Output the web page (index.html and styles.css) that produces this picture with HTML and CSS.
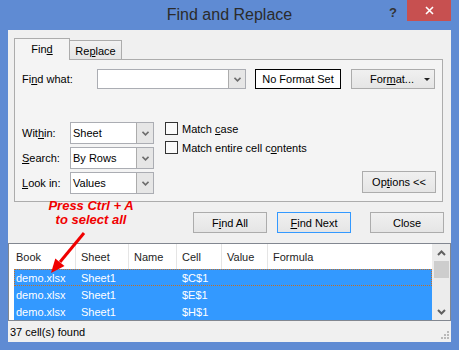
FILE: index.html
```html
<!DOCTYPE html>
<html lang="en">
<head>
    <meta charset="UTF-8">
    <title>Find and Replace</title>
    <link rel="stylesheet" href="styles.css">
</head>
<body>

    <div class="window">
        <div class="titlebar">
            <span></span>
            <div class="title">Find and Replace</div>
            <div class="controls">
                <span class="help">?</span>
                <span class="close">
                    <svg width="9" height="9" viewBox="0 0 9 9"><path d="M1 1L8 8M8 1L1 8" stroke="#fff" stroke-width="1.6"/></svg>
                </span>
            </div>
        </div>

        <div class="client">
            <div class="tabs">
                <div class="tab active">Fin<u>d</u></div>
                <div class="tab">Re<u>p</u>lace</div>
            </div>

            <div class="panel">
                <div class="find-row">
                    <span class="find-label">Fi<u>n</u>d what:</span>
                    <div class="combo wide">
                        <span class="value"></span>
                        <span class="drop"><svg width="7" height="5" viewBox="0 0 7 5"><path d="M0.5 0.8L3.5 3.8L6.5 0.8" fill="none" stroke="#6d6d6d" stroke-width="1.6"/></svg></span>
                    </div>
                    <div class="no-format">No Format Set</div>
                    <button class="btn format-btn"><span>For<u>m</u>at...</span><span class="caret"></span></button>
                </div>

                <div class="lower">
                    <div class="fields">
                        <span>Wit<u>h</u>in:</span>
                        <div class="combo">
                            <span class="value">Sheet</span>
                            <span class="drop"><svg width="7" height="5" viewBox="0 0 7 5"><path d="M0.5 0.8L3.5 3.8L6.5 0.8" fill="none" stroke="#6d6d6d" stroke-width="1.6"/></svg></span>
                        </div>
                        <span><u>S</u>earch:</span>
                        <div class="combo">
                            <span class="value">By Rows</span>
                            <span class="drop"><svg width="7" height="5" viewBox="0 0 7 5"><path d="M0.5 0.8L3.5 3.8L6.5 0.8" fill="none" stroke="#6d6d6d" stroke-width="1.6"/></svg></span>
                        </div>
                        <span><u>L</u>ook in:</span>
                        <div class="combo">
                            <span class="value">Values</span>
                            <span class="drop"><svg width="7" height="5" viewBox="0 0 7 5"><path d="M0.5 0.8L3.5 3.8L6.5 0.8" fill="none" stroke="#6d6d6d" stroke-width="1.6"/></svg></span>
                        </div>
                    </div>

                    <div class="checks">
                        <label class="check"><span class="box"></span><span>Match <u>c</u>ase</span></label>
                        <label class="check"><span class="box"></span><span>Match entire cell c<u>o</u>ntents</span></label>
                    </div>

                    <button class="btn options-btn">Op<u>t</u>ions &lt;&lt;</button>
                </div>
            </div>

            <div class="actions">
                <button class="btn">F<u>i</u>nd All</button>
                <button class="btn default"><u>F</u>ind Next</button>
                <button class="btn close-btn">Close</button>
            </div>

            <div class="results">
                <div class="list">
                    <div class="list-head">
                        <span>Book</span>
                        <span>Sheet</span>
                        <span>Name</span>
                        <span>Cell</span>
                        <span>Value</span>
                        <span>Formula</span>
                    </div>
                    <div class="list-row focused">
                        <span>demo.xlsx</span><span>Sheet1</span><span></span><span>$C$1</span><span></span><span></span>
                    </div>
                    <div class="list-row">
                        <span>demo.xlsx</span><span>Sheet1</span><span></span><span>$E$1</span><span></span><span></span>
                    </div>
                    <div class="list-row">
                        <span>demo.xlsx</span><span>Sheet1</span><span></span><span>$H$1</span><span></span><span></span>
                    </div>
                </div>
                <div class="scrollbar">
                    <span class="arrow"><svg width="9" height="6" viewBox="0 0 9 6"><path d="M1 5L4.5 1.5L8 5" fill="none" stroke="#606060" stroke-width="2"/></svg></span>
                    <span class="thumb"></span>
                    <span class="track"></span>
                    <span class="arrow"><svg width="9" height="6" viewBox="0 0 9 6"><path d="M1 1L4.5 4.5L8 1" fill="none" stroke="#606060" stroke-width="2"/></svg></span>
                </div>
            </div>

            <div class="status">
                37 cell(s) found
                <svg class="grip" width="9" height="9" viewBox="0 0 9 9">
                    <rect x="6" y="0" width="2" height="2" fill="#b9b9b9"/>
                    <rect x="3" y="3" width="2" height="2" fill="#b9b9b9"/>
                    <rect x="6" y="3" width="2" height="2" fill="#b9b9b9"/>
                    <rect x="0" y="6" width="2" height="2" fill="#b9b9b9"/>
                    <rect x="3" y="6" width="2" height="2" fill="#b9b9b9"/>
                    <rect x="6" y="6" width="2" height="2" fill="#b9b9b9"/>
                </svg>
            </div>

            <!-- annotation drawn over the dialog -->
            <div class="note">
                <div>Press Ctrl + A</div>
                <div>to select all</div>
            </div>
            <svg class="note-arrow" width="55" height="55" viewBox="0 0 55 55">
                <path d="M41 8L17 37" stroke="#f00000" stroke-width="3"/>
                <path d="M8 48L21.5 41L12.3 33.4Z" fill="#f00000"/>
            </svg>
        </div>
    </div>

</body>
</html>
```

FILE: styles.css
```css
* {
    margin: 0;
    padding: 0;
    box-sizing: border-box;
}

body {
    width: 459px;
    height: 350px;
    overflow: hidden;
    font-family: "Liberation Sans", Arial, sans-serif;
    font-size: 11px;
    color: #000;
}

u {
    text-decoration: underline;
    text-underline-offset: 1px;
}

.window {
    height: 350px;
    background: #5f8bd3;
    padding: 0 8px 8px;
    display: flex;
    flex-direction: column;
}

/* title bar */
.titlebar {
    height: 30px;
    display: grid;
    grid-template-columns: 1fr auto 1fr;
}

.title {
    font-size: 16px;
    color: #2b2b2b;
    line-height: 30px;
}

.controls {
    justify-self: end;
    display: flex;
    align-items: flex-start;
}

.help {
    font-size: 13px;
    font-weight: bold;
    color: #333;
    margin-top: 5px;
    margin-right: 10px;
}

.close {
    width: 44px;
    height: 21px;
    background: #c75050;
    display: flex;
    align-items: center;
    justify-content: center;
}

/* dialog body */
.client {
    flex: 1;
    background: #f0f0f0;
    position: relative;
    display: flex;
    flex-direction: column;
    padding-top: 8px;
}

.tabs {
    display: flex;
    align-items: flex-end;
    height: 21px;
    margin-left: 6px;
    position: relative;
    z-index: 1;
}

.tab {
    height: 19px;
    width: 53px;
    margin-left: -1px;
    border: 1px solid #acacac;
    border-bottom: none;
    background: linear-gradient(#f2f2f2, #e5e5e5);
    display: flex;
    align-items: center;
    justify-content: center;
    padding-top: 1px;
}

.tab.active {
    height: 22px;
    width: 56px;
    margin-left: 0;
    margin-bottom: -1px;
    background: #f4f4f4;
    padding-bottom: 2px;
}

.panel {
    margin: 0 8px 0 6px;
    height: 143px;
    border: 1px solid #acacac;
    background: #f4f4f4;
    padding: 9px 6px 0 7px;
}

.find-row {
    display: flex;
    align-items: center;
    height: 20px;
}

.find-label {
    width: 75px;
}

.combo {
    display: flex;
    height: 22px;
    background: #fff;
    border: 1px solid #abadb3;
}

.combo.wide {
    width: 149px;
    height: 20px;
}

.combo .value {
    flex: 1;
    display: flex;
    align-items: center;
    padding-left: 2px;
}

.combo .drop {
    width: 17px;
    background: #e6e6e6;
    border-left: 1px solid #acacac;
    display: flex;
    align-items: center;
    justify-content: center;
}

.no-format {
    margin-left: 9px;
    width: 86px;
    height: 20px;
    border: 1px solid #000;
    background: #fff;
    display: flex;
    align-items: center;
    justify-content: center;
}

.btn {
    height: 21px;
    width: 74px;
    border: 1px solid #acacac;
    background: linear-gradient(#f0f0f0, #e5e5e5);
    font-family: inherit;
    font-size: 11px;
    color: #000;
}

.format-btn {
    margin-left: 10px;
    width: 84px;
    height: 20px;
    display: flex;
    align-items: center;
    padding: 0 4px 0 18px;
}

.caret {
    margin-left: auto;
    border-left: 3px solid transparent;
    border-right: 3px solid transparent;
    border-top: 3px solid #222;
}

.lower {
    display: flex;
    margin-top: 33px;
    height: 72px;
}

.fields {
    display: grid;
    grid-template-columns: 48px 84px;
    grid-auto-rows: 22px;
    row-gap: 3px;
    align-items: center;
}

.checks {
    margin-left: 11px;
    display: flex;
    flex-direction: column;
    gap: 6px;
}

.check {
    display: flex;
    align-items: center;
    gap: 4px;
    height: 13px;
}

.check .box {
    width: 13px;
    height: 13px;
    border: 1px solid #333;
    background: #fafafa;
}

.options-btn {
    margin-left: auto;
    align-self: flex-end;
    height: 22px;
    margin-bottom: 1px;
}

/* buttons row */
.actions {
    display: flex;
    justify-content: flex-end;
    margin-top: 10px;
    padding-right: 7px;
}

.actions .btn {
    margin-left: 10px;
}

.actions .btn.default {
    border-color: #3399ff;
}

.actions .close-btn {
    margin-left: 19px;
    width: 74px;
}

/* results list */
.results {
    margin-top: 10px;
    height: 78px;
    border: 1px solid #828790;
    background: #fff;
    display: flex;
}

.list {
    flex: 1;
}

.list-head {
    height: 25px;
    display: grid;
    grid-template-columns: 67px 53px 48px 45px 46px 1fr;
    color: #1e1e1e;
}

.list-head span {
    border-right: 1px solid #e5e5e5;
    padding-left: 5px;
    display: flex;
    align-items: center;
}

.list-head span:first-child {
    padding-left: 7px;
}

.list-head span:last-child {
    border-right: none;
}

.list-row {
    height: 17px;
    margin-left: 5px;
    display: grid;
    grid-template-columns: 62px 53px 48px 45px 46px 1fr;
    background: #3399ff;
    color: #fff;
    align-items: center;
}

.list-row span {
    padding-left: 5px;
}

.list-row span:first-child {
    padding-left: 2px;
}

.list-row.focused {
    outline: 1px dotted #c0702a;
    outline-offset: -1px;
}

.scrollbar {
    width: 18px;
    background: #ececec;
    display: flex;
    flex-direction: column;
    align-items: center;
}

.scrollbar .arrow {
    height: 17px;
    display: flex;
    align-items: center;
    justify-content: center;
}

.scrollbar .thumb {
    width: 15px;
    height: 17px;
    background: #cdcdcd;
}

.scrollbar .track {
    flex: 1;
}

.status {
    height: 21px;
    padding-left: 2px;
    display: flex;
    align-items: center;
    position: relative;
}

.grip {
    position: absolute;
    right: 1px;
    bottom: 2px;
}

/* red annotation */
.note {
    position: absolute;
    left: 40px;
    top: 169px;
    width: 86px;
    text-align: center;
    white-space: nowrap;
    color: #f00000;
    font-size: 13px;
    font-weight: bold;
    font-style: italic;
    line-height: 14px;
}

.note-arrow {
    position: absolute;
    left: 35px;
    top: 195px;
}
```
